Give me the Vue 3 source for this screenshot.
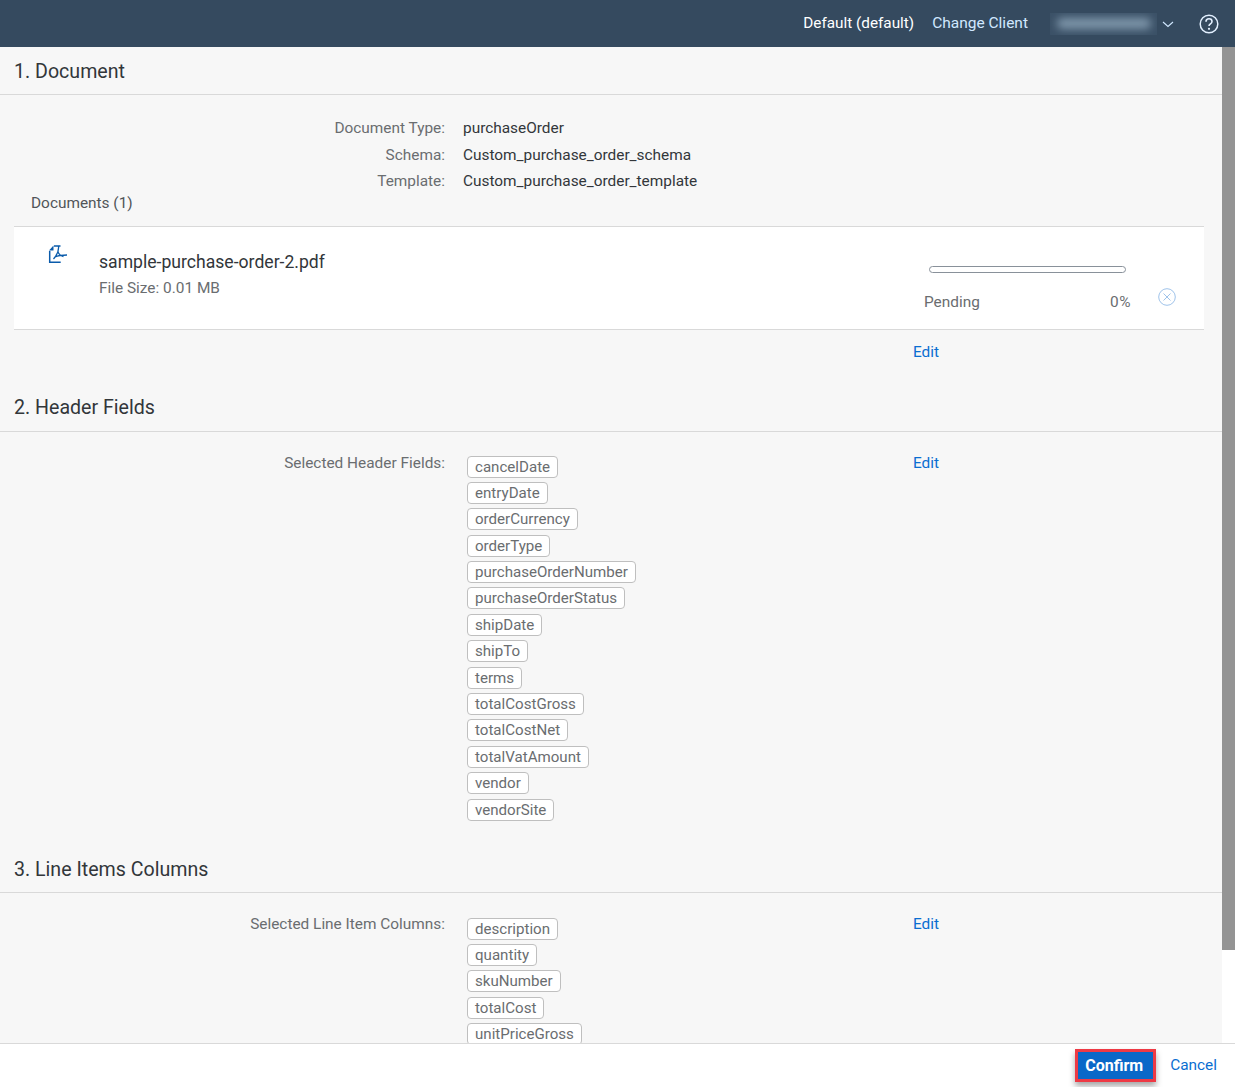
<template>
  <div class="page">
    <header class="shell">
      <span class="client">Default (default)</span>
      <a class="change">Change Client</a>
      <span class="user"><span class="user-blur"></span></span>
      <svg class="chev" width="12" height="12" viewBox="0 0 12 12"><path d="M1 4l5 4.500L11 4" fill="none" stroke="#d1e8ff" stroke-width="1.100"/></svg>
      <svg class="help" width="20" height="20" viewBox="0 0 20 20">
        <circle cx="10" cy="10" r="8.800" fill="none" stroke="#e3f0ff" stroke-width="1.500"/>
        <path d="M7 7.700c0-1.800 1.300-2.900 3-2.900s3 1.100 3 2.600c0 2.500-3 2.300-3 4.600" fill="none" stroke="#e3f0ff" stroke-width="1.600"/>
        <circle cx="10" cy="14.800" r="1.100" fill="#e3f0ff"/>
      </svg>
    </header>

    <div class="body">
      <main class="content">
        <section class="sec-doc">
          <h2>1. Document</h2>
          <div class="info">
            <div class="info-row" v-for="row in infoRows" :key="row.label">
              <span class="label">{{ row.label }}:</span>
              <span class="value">{{ row.value }}</span>
            </div>
          </div>
          <div class="doc-title">Documents (1)</div>
          <div class="doc-item">
            <svg class="pdf" width="20" height="20" viewBox="0 0 20 20">
              <path d="M6 1h6.500M1.700 6v11.300h11" fill="none" stroke="#0a5bab" stroke-width="1.500"/>
              <path d="M1 5.500L5.500 .5v5z" fill="#0a5bab"/>
              <path d="M10.500 1c.5 4-1.500 9-5 13M10 7c1 2.500 3 4 5.500 4.500M7 12c3-1.500 6.500-2 12-2" fill="none" stroke="#0a5bab" stroke-width="1.300"/>
            </svg>
            <div class="doc-text">
              <div class="doc-name">sample-purchase-order-2.pdf</div>
              <div class="doc-size">File Size: 0.01 MB</div>
            </div>
            <div class="progress">
              <div class="bar"></div>
              <div class="progress-text">
                <span>Pending</span>
                <span class="pct">0%</span>
              </div>
            </div>
            <svg class="cancel" width="18" height="18" viewBox="0 0 18 18">
              <circle cx="9" cy="9" r="8.300" fill="none" stroke="#9fc3ea" stroke-width="1"/>
              <path d="M5.500 5.500l7 7M12.500 5.500l-7 7" stroke="#9fc3ea" stroke-width="1" fill="none"/>
            </svg>
          </div>
          <div class="edit-row"><a class="edit">Edit</a></div>
        </section>

        <section class="sec-header">
          <h2>2. Header Fields</h2>
          <div class="tags-row">
            <span class="label">Selected Header Fields:</span>
            <div class="tags">
              <span class="tag" v-for="t in headerFields" :key="t">{{ t }}</span>
            </div>
            <a class="edit">Edit</a>
          </div>
        </section>

        <section class="sec-lines">
          <h2>3. Line Items Columns</h2>
          <div class="tags-row">
            <span class="label">Selected Line Item Columns:</span>
            <div class="tags">
              <span class="tag" v-for="t in lineColumns" :key="t">{{ t }}</span>
            </div>
            <a class="edit">Edit</a>
          </div>
        </section>
      </main>
      <div class="scrollbar"><div class="thumb"></div></div>
    </div>

    <footer class="footer">
      <button class="confirm">Confirm</button>
      <a class="cancel-link">Cancel</a>
    </footer>
  </div>
</template>

<script setup>
const infoRows = [
  { label: 'Document Type', value: 'purchaseOrder' },
  { label: 'Schema', value: 'Custom_purchase_order_schema' },
  { label: 'Template', value: 'Custom_purchase_order_template' }
]

const headerFields = [
  'cancelDate', 'entryDate', 'orderCurrency', 'orderType', 'purchaseOrderNumber',
  'purchaseOrderStatus', 'shipDate', 'shipTo', 'terms', 'totalCostGross',
  'totalCostNet', 'totalVatAmount', 'vendor', 'vendorSite'
]

const lineColumns = ['description', 'quantity', 'skuNumber', 'totalCost', 'unitPriceGross']
</script>

<style>
html, body {
  margin: 0;
  background: #fff;
}
</style>

<style scoped>
.page {
  width: 1235px;
  height: 1087px;
  display: flex;
  flex-direction: column;
  overflow: hidden;
  font-family: Roboto, "Noto Sans", sans-serif;
  font-size: 15.400px;
  color: #32363a;
}

.shell {
  height: 47px;
  flex: none;
  background: #354a5f;
  display: flex;
  align-items: center;
  padding-right: 16px;
  justify-content: flex-end;
  box-sizing: border-box;
}

.client {
  color: #fff;
  margin: 0 18px 2px 0;
  font-size: 15.300px;
}

.change {
  color: #d1e8ff;
  margin: 0 22px 2px 0;
  font-size: 15.500px;
}

.user {
  width: 107px;
  height: 22px;
  background: #3b5167;
  overflow: hidden;
  display: flex;
  align-items: center;
  justify-content: center;
  margin-right: 5px;
}

.user-blur {
  width: 94px;
  height: 11px;
  border-radius: 5px;
  background: #7f97ab;
  filter: blur(4px);
}

.chev {
  margin-right: 25px;
}

.body {
  flex: 1;
  min-height: 0;
  display: flex;
}

.content {
  flex: 1;
  min-width: 0;
  background: #f7f7f7;
  overflow: hidden;
}

.scrollbar {
  width: 13px;
  flex: none;
  background: #fff;
}

.thumb {
  height: 903px;
  background: #949494;
}

h2 {
  margin: 0;
  height: 47px;
  line-height: 50px;
  padding-left: 14px;
  font-size: 19.600px;
  font-weight: 400;
  border-bottom: 1px solid #d9d9d9;
}

.sec-header h2 {
  height: 48px;
}

.info {
  padding-top: 20px;
}

.info-row {
  display: flex;
  height: 26.500px;
  line-height: 26.500px;
}

.label {
  width: 445px;
  flex: none;
  text-align: right;
  color: #6a6d70;
}

.value {
  margin-left: 18px;
}

.doc-title {
  padding-left: 31px;
  height: 35px;
  line-height: 24px;
  margin-top: -4px;
  color: #515559;
}

.doc-item {
  margin: 0 18px 0 14px;
  height: 102px;
  background: #fff;
  border-top: 1px solid #d9d9d9;
  border-bottom: 1px solid #d9d9d9;
  display: flex;
}

.pdf {
  margin: 18px 0 0 34px;
}

.doc-text {
  margin: 22px 0 0 31px;
  flex: 1;
}

.doc-name {
  font-size: 17.600px;
  line-height: 26px;
}

.doc-size {
  color: #6a6d70;
  line-height: 26px;
}

.progress {
  width: 208px;
  margin: 39px 0 0;
}

.bar {
  height: 5px;
  width: 195px;
  margin-left: 5px;
  border: 1px solid #89919a;
  border-radius: 4px;
}

.progress-text {
  display: flex;
  justify-content: space-between;
  margin-top: 17px;
  color: #6a6d70;
  line-height: 24px;
}

.pct {
  margin-right: 1px;
  letter-spacing: 0.500px;
}

.cancel {
  margin: 61px 28px 0 26px;
}

.edit-row {
  padding: 10px 0 0 913px;
  line-height: 24px;
  height: 43px;
}

.edit {
  color: #0a6ed1;
}

.tags-row {
  display: flex;
  align-items: flex-start;
  padding-top: 19px;
  line-height: 24px;
}

.sec-lines .tags {
  margin-top: 6px;
}

.tags {
  width: 446px;
  flex: none;
  margin-left: 22px;
  display: flex;
  flex-direction: column;
  align-items: flex-start;
  gap: 4.400px;
  margin-top: 5px;
}

.tag {
  height: 22px;
  box-sizing: border-box;
  line-height: 20px;
  padding: 0 7px;
  border: 1px solid #bfbfbf;
  border-radius: 4px;
  background: #fff;
  color: #6a6d70;
  font-size: 15.100px;
}

.sec-header {
  height: 462px;
}

.footer {
  height: 44px;
  flex: none;
  background: #fff;
  border-top: 1px solid #d9d9d9;
  box-sizing: border-box;
  padding: 0 18px 1px 0;
  display: flex;
  align-items: center;
  justify-content: flex-end;
}

.confirm {
  font-family: inherit;
  font-size: 16px;
  font-weight: 700;
  color: #fff;
  background: #0a68c8;
  height: 27px;
  width: 75px;
  padding: 0 3px 0 0;
  border: none;
  outline: 3px solid #ee3a45;
  box-shadow: 0 4px 6px 3px rgba(0, 0, 0, 0.35);
  margin-right: 17px;
}

.cancel-link {
  color: #0a6ed1;
}
</style>
